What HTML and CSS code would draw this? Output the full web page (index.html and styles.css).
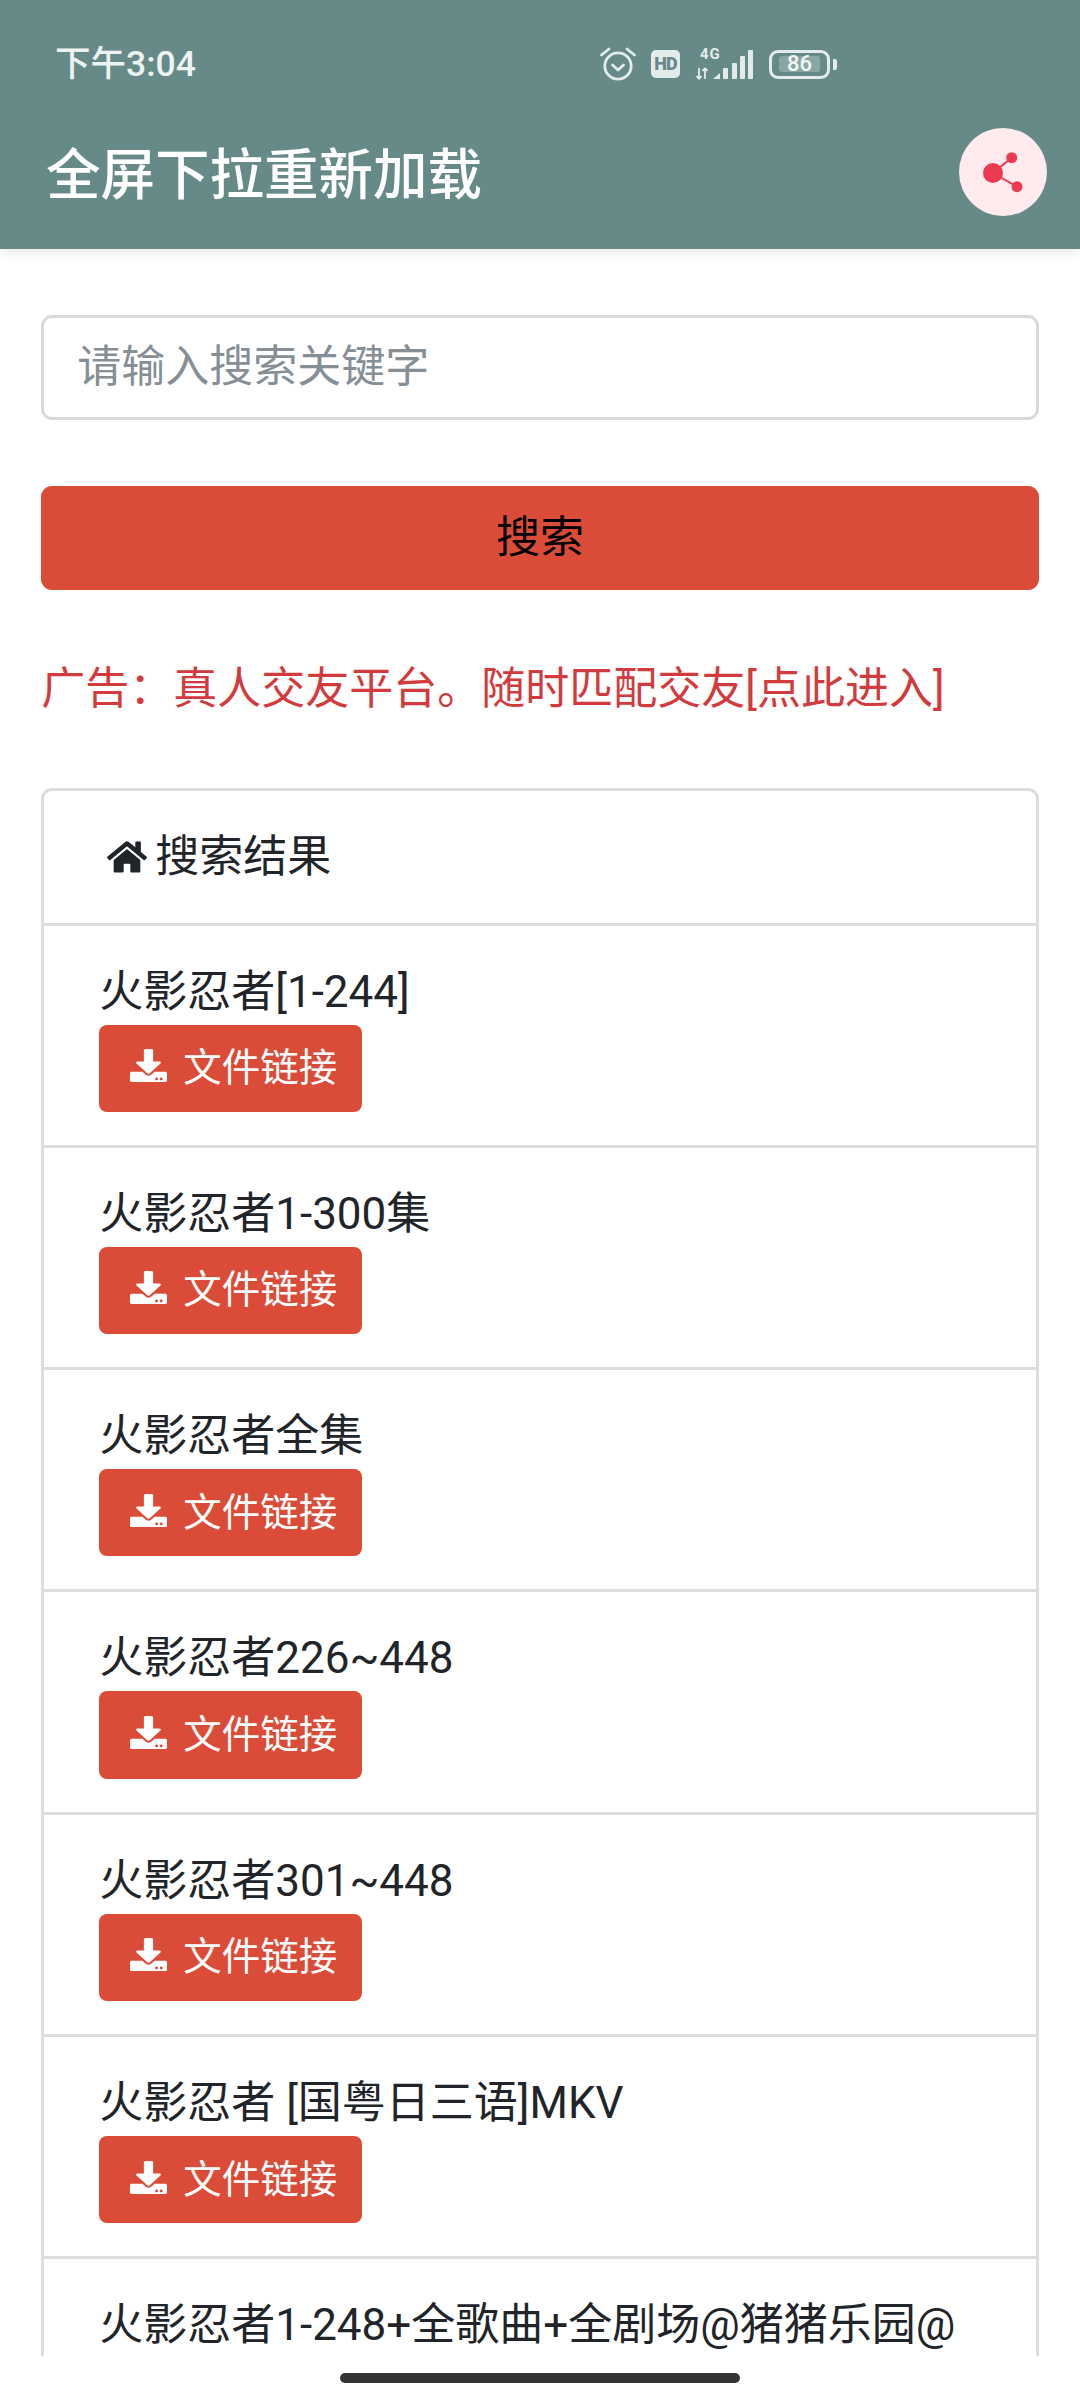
FILE: index.html
```html
<!DOCTYPE html>
<html lang="zh-CN">
<head>
    <meta charset="UTF-8">
    <meta name="viewport" content="width=device-width, initial-scale=1.0">
    <title>全屏下拉重新加载</title>
    <link rel="stylesheet" href="styles.css">
</head>
<body>
    <svg class="icon-defs" width="0" height="0">
        <symbol id="icon-download" viewBox="0 0 512 512" preserveAspectRatio="none">
            <path fill="currentColor" d="M216 0h80c13.3 0 24 10.7 24 24v168h87.7c17.8 0 26.7 21.5 14.1 34.1L269.7 378.3c-7.5 7.5-19.8 7.5-27.3 0L90.1 226.1c-12.6-12.6-3.7-34.1 14.1-34.1H192V24c0-13.3 10.7-24 24-24zm296 376v112c0 13.3-10.7 24-24 24H24c-13.3 0-24-10.7-24-24V376c0-13.3 10.7-24 24-24h146.7l49 49c20.1 20.1 52.5 20.1 72.6 0l49-49H488c13.3 0 24 10.7 24 24zm-124 88c0-11-9-20-20-20s-20 9-20 20 9 20 20 20 20-9 20-20zm64 0c0-11-9-20-20-20s-20 9-20 20 9 20 20 20 20-9 20-20z"/>
        </symbol>
    </svg>

    <header class="app-header">
        <div class="status-bar">
            <span class="status-time">下午3:04</span>
            <div class="status-icons">
                <svg class="icon-alarm" viewBox="0 0 36 34" width="36" height="34" fill="none" stroke="#e3eceb" stroke-width="2.8" stroke-linecap="round" stroke-linejoin="round">
                    <circle cx="18" cy="19" r="13.2"/>
                    <path d="M12.5 18l5.5 5 5.5-5"/>
                    <path d="M1.5 8l7.5-6M34.5 8l-7.5-6"/>
                </svg>
                <span class="status-hd">HD</span>
                <svg class="icon-signal" viewBox="0 -6 58 38" width="58" height="38" fill="#e3eceb">
                    <text x="5" y="11" class="signal-text">4G</text>
                    <path d="M4 20v11M4 31l-2.5-3M4 31l2.5-3M10 31V20M10 20l-2.5 3M10 20l2.5 3" stroke="#e3eceb" stroke-width="1.8" fill="none"/>
                    <path d="M18 31l7-6v6z"/>
                    <rect x="28" y="20" width="5" height="11" rx="1"/>
                    <rect x="37" y="15" width="5" height="16" rx="1"/>
                    <rect x="45" y="8" width="5" height="23" rx="1"/>
                    <rect x="53" y="2" width="5" height="29" rx="1"/>
                </svg>
                <div class="status-battery">
                    <div class="battery-body"><span class="battery-level">86</span></div>
                    <div class="battery-tip"></div>
                </div>
            </div>
        </div>
        <div class="title-bar">
            <h1>全屏下拉重新加载</h1>
            <button class="share-btn" type="button">
                <svg viewBox="0 0 42 42" width="42" height="42" fill="#ec3a50">
                    <circle cx="11" cy="22" r="10"/>
                    <circle cx="29.7" cy="6.7" r="5.5"/>
                    <circle cx="35" cy="35.7" r="5.5"/>
                    <path d="M11 22L29.7 6.7M11 22l24 13.7" stroke="#ec3a50" stroke-width="2"/>
                </svg>
            </button>
        </div>
    </header>

    <main class="content">
        <input class="search-input" type="text" placeholder="请输入搜索关键字">
        <button class="search-btn" type="button">搜索</button>
        <p class="ad-text">广告：真人交友平台。随时匹配交友[点此进入]</p>

        <ul class="result-list">
            <li class="result-head">
                <svg class="icon-home" viewBox="0 0 576 512" fill="currentColor"><path d="M280.37 148.26L96 300.11V464a16 16 0 0 0 16 16l112.06-.29a16 16 0 0 0 15.92-16V368a16 16 0 0 1 16-16h64a16 16 0 0 1 16 16v95.64a16 16 0 0 0 16 16.05L464 480a16 16 0 0 0 16-16V300L295.67 148.26a12.19 12.19 0 0 0-15.3 0zM571.6 251.47L488 182.56V44.05a12 12 0 0 0-12-12h-56a12 12 0 0 0-12 12v72.61L318.47 43a48 48 0 0 0-61 0L4.34 251.47a12 12 0 0 0-1.6 16.9l25.5 31A12 12 0 0 0 45.15 301l235.22-193.74a12.19 12.19 0 0 1 15.3 0L530.9 301a12 12 0 0 0 16.9-1.6l25.5-31a12 12 0 0 0-1.7-16.93z"/></svg>
                搜索结果
            </li>
            <li class="result-item">
                <div class="result-name">火影忍者[1-244]</div>
                <a class="file-btn"><svg class="icon-download"><use href="#icon-download"/></svg>文件链接</a>
            </li>
            <li class="result-item">
                <div class="result-name">火影忍者1-300集</div>
                <a class="file-btn"><svg class="icon-download"><use href="#icon-download"/></svg>文件链接</a>
            </li>
            <li class="result-item">
                <div class="result-name">火影忍者全集</div>
                <a class="file-btn"><svg class="icon-download"><use href="#icon-download"/></svg>文件链接</a>
            </li>
            <li class="result-item">
                <div class="result-name">火影忍者226~448</div>
                <a class="file-btn"><svg class="icon-download"><use href="#icon-download"/></svg>文件链接</a>
            </li>
            <li class="result-item">
                <div class="result-name">火影忍者301~448</div>
                <a class="file-btn"><svg class="icon-download"><use href="#icon-download"/></svg>文件链接</a>
            </li>
            <li class="result-item">
                <div class="result-name">火影忍者 [国粤日三语]MKV</div>
                <a class="file-btn"><svg class="icon-download"><use href="#icon-download"/></svg>文件链接</a>
            </li>
            <li class="result-item">
                <div class="result-name">火影忍者1-248+全歌曲+全剧场@猪猪乐园@</div>
            </li>
        </ul>
    </main>

    <div class="nav-bar"><div class="nav-pill"></div></div>
</body>
</html>
```

FILE: styles.css
```css
* {
    box-sizing: border-box;
}
html, body {
    height: 100%;
}
body {
    display: flex;
    flex-direction: column;
    margin: 0;
    overflow: hidden;
    background: #fff;
    color: #212529;
    font-family: Roboto, "Noto Sans CJK SC", sans-serif;
    font-size: 44px;
    line-height: 66px;
}
.icon-defs {
    display: block;
    flex: none;
}

/* header + status bar */
.app-header {
    position: relative;
    z-index: 2;
    flex: none;
    height: 249px;
    background-color: #668a88;
    box-shadow: 0 3px 12px rgba(0, 0, 0, 0.1);
}
.status-bar {
    display: flex;
    justify-content: space-between;
    align-items: center;
    height: 96px;
    padding: 32px 243px 0 55px;
}
.status-time {
    color: #eef3f2;
    font-size: 35.5px;
    font-weight: 500;
    line-height: 40px;
}
.status-icons {
    display: flex;
    align-items: center;
}
.icon-alarm {
    margin-right: 15px;
}
.status-hd {
    width: 29px;
    height: 28px;
    margin-right: 15px;
    border-radius: 5px;
    background: #e3eceb;
    color: #668a88;
    font-size: 18px;
    font-weight: 900;
    letter-spacing: -1px;
    line-height: 28px;
    text-align: center;
}
.icon-signal {
    margin: -6px 16px 0 0;
}
.signal-text {
    font-family: Roboto, sans-serif;
    font-size: 15px;
    font-weight: 700;
    letter-spacing: 1px;
}
.status-battery {
    display: flex;
    align-items: center;
}
.battery-body {
    display: flex;
    align-items: center;
    justify-content: center;
    width: 61px;
    height: 29px;
    border: 3.5px solid #e3eceb;
    border-radius: 9px;
}
.battery-level {
    width: 41px;
    height: 16px;
    border-radius: 3px;
    background: #8aa6a4;
    color: #f2f6f5;
    font-size: 22px;
    font-weight: 500;
    line-height: 16px;
    text-align: center;
}
.battery-tip {
    width: 4px;
    height: 11px;
    margin-left: 3px;
    border-radius: 0 2px 2px 0;
    background: #e3eceb;
}
.title-bar {
    display: flex;
    justify-content: space-between;
    align-items: center;
    height: 88px;
    margin-top: 32px;
    padding: 0 33px 0 46px;
}
.title-bar h1 {
    margin: 0;
    padding-top: 6px;
    color: #fff;
    font-size: 54.5px;
    font-weight: 500;
    line-height: 60px;
}
.share-btn {
    display: flex;
    justify-content: center;
    align-items: center;
    width: 88px;
    height: 88px;
    padding: 0;
    border: none;
    border-radius: 50%;
    background-color: #ffebee;
}

/* page body */
.content {
    flex: 1;
    min-height: 0;
    overflow: hidden;
    padding: 66px 41.25px 0;
}
.search-input {
    display: block;
    width: 100%;
    height: 104.5px;
    padding: 0 33px;
    border: 3px solid #dadada;
    border-radius: 11px;
    background: #fff;
    color: #495057;
    font: inherit;
}
.search-input::placeholder {
    color: #868e96;
    opacity: 1;
}
.search-btn {
    display: block;
    width: 100%;
    height: 104px;
    margin-top: 66px;
    border: none;
    border-radius: 11px;
    background-color: #db4c38;
    color: #000;
    font: inherit;
}
.ad-text {
    margin: 66px 0 0;
    color: #d33a3d;
}
.result-list {
    margin: 66px 0 0;
    padding: 0;
    list-style: none;
    border: 3px solid #ddd;
    border-bottom: none;
    border-radius: 11px 11px 0 0;
}
.result-head {
    display: flex;
    align-items: center;
    padding: 33px 0 33px 63px;
    border-bottom: 3px solid #ddd;
}
.icon-home {
    width: 40px;
    height: 36px;
    margin-right: 8px;
}
.result-item {
    padding: 33px 55px;
    border-bottom: 3px solid #ddd;
}
.result-name {
    white-space: nowrap;
}
.file-btn {
    display: inline-flex;
    align-items: center;
    height: 87.3px;
    vertical-align: top;
    padding: 0 25px 0 31px;
    border-radius: 8px;
    background-color: #db4c38;
    color: #fff;
    font-size: 38.5px;
}
.icon-download {
    width: 37px;
    height: 33px;
    margin: 0 16px 5px 0;
}

/* gesture bar */
.nav-bar {
    flex: none;
    display: flex;
    justify-content: center;
    height: 44px;
    padding-top: 17px;
    background: #fff;
}
.nav-pill {
    width: 400px;
    height: 10px;
    border-radius: 5px;
    background: #333;
}
```
